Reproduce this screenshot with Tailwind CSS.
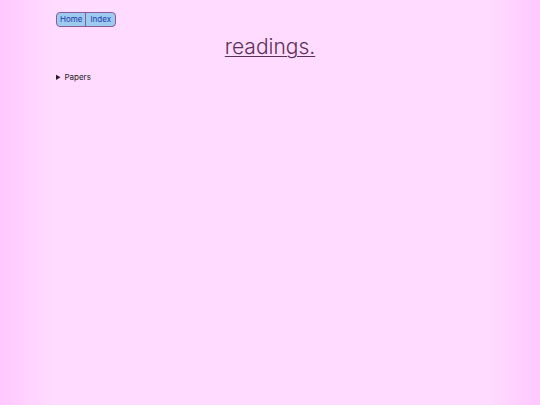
<!DOCTYPE html>
<html lang="en">
<head>
    <meta charset="UTF-8">
    <meta name="viewport" content="width=device-width, initial-scale=1.0">
    <title>readings.</title>
    <script src="https://cdn.jsdelivr.net/npm/@tailwindcss/browser@4"></script>
</head>
<body class="min-h-screen px-14 pt-3 font-['Inter',sans-serif] text-[8px] leading-3 text-[#251a25] bg-[linear-gradient(to_right,#ffc8ff,#ffdcff_10%,#ffdcff_90%,#ffc8ff)]">

    <nav class="flex w-fit overflow-hidden rounded border border-[#8a5a9c] bg-[#9ccbee] leading-[13px] text-[#2438ac]">
        <a href="index.html" class="border-r border-[#8a5a9c] px-[3px]">Home</a>
        <a href="list.html" class="px-1">Index</a>
    </nav>

    <h1 class="mt-1 text-center text-[21px] font-light leading-8 text-[#5a305a] underline decoration-1 underline-offset-2">readings.</h1>

    <details class="mt-2">
        <summary>Papers</summary>
    </details>

</body>
</html>
